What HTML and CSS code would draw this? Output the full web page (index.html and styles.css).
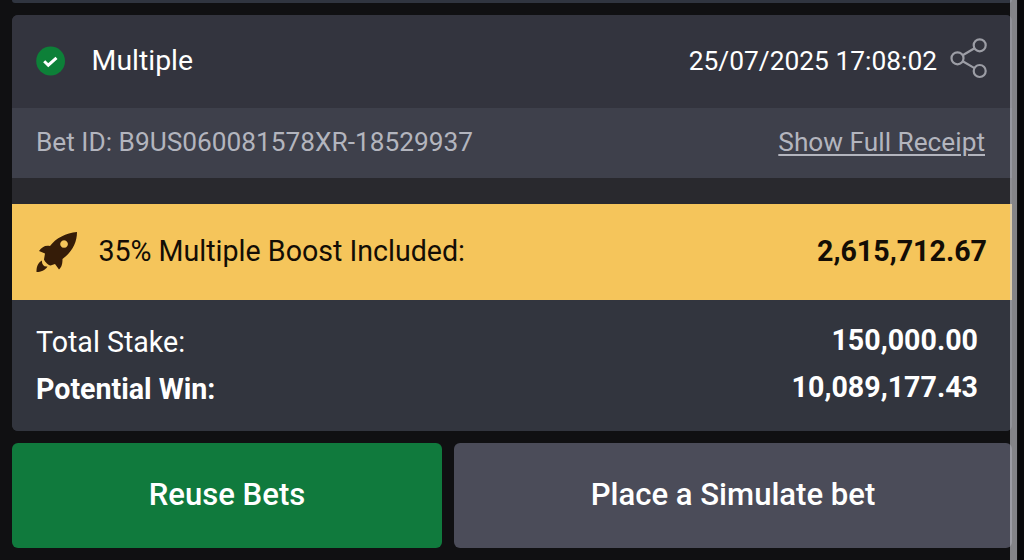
FILE: index.html
```html
<!DOCTYPE html>
<html lang="en">
<head>
	<meta charset="UTF-8">
	<title>Bet Receipt</title>
	<link rel="stylesheet" href="styles.css">
</head>
<body>
	<div class="previous-card"></div>
	<main class="card">
		<header class="card-header">
			<svg class="check" viewBox="0 0 30 30"><circle cx="14.6" cy="15" r="14.4" fill="#0d8038"/><path d="M8.2 15.2l4.1 4 8.2-7.4" fill="none" stroke="#fff" stroke-width="3"/></svg>
			<h1>Multiple</h1>
			<time>25/07/2025 17:08:02</time>
			<svg class="share" viewBox="0 0 38 42"><g fill="none" stroke="#9c9da5" stroke-width="2.2"><circle cx="7.5" cy="21.3" r="6"/><circle cx="29.7" cy="8.3" r="6"/><circle cx="29.7" cy="34" r="6"/><path d="M12.7 18.3l11.8-7M12.7 24.3l11.8 6.8"/></g></svg>
		</header>
		<section class="bet-id">
			<span class="bet-number">Bet ID: B9US060081578XR-18529937</span>
			<a class="receipt-link">Show Full Receipt</a>
		</section>
		<section class="boost">
			<svg class="rocket" viewBox="0 0 42 42"><path fill="#351c08" fill-rule="evenodd" d="M41 1C30 2 20 7 14 15C9 14 6 16 3 20L9 22.5L8 28.5C9 31 12 34 14.5 34.5L19 33L23 38.5C26 36 26.5 32 26.5 28C36 21 41 12 41 1ZM28 9.2a3.8 3.8 0 1 0 .1 0Z"/><path fill="#351c08" d="M5.8 29.5C2 32 .5 35 .5 41C5 41 9 39.5 11.5 35.5C8 36 6 34 5.8 29.5Z"/></svg>
			<span class="boost-label">35% Multiple Boost Included:</span>
			<strong class="boost-value">2,615,712.67</strong>
		</section>
		<section class="totals">
			<div class="row stake"><span>Total Stake:</span><strong>150,000.00</strong></div>
			<div class="row win"><span>Potential Win:</span><strong>10,089,177.43</strong></div>
		</section>
	</main>
	<nav class="actions">
		<button class="reuse">Reuse Bets</button>
		<button class="simulate">Place a Simulate bet</button>
	</nav>
	<div class="scrollbar"></div>
</body>
</html>
```

FILE: styles.css
```css
* {margin:0;padding:0;box-sizing:border-box;}
body {width:1024px;height:560px;padding:0 12px;background-color:#101012;color:#fff;font-family:Roboto,sans-serif;overflow:hidden;position:relative;}
svg {display:block;flex:none;}
span, strong, time, a, h1 {white-space:nowrap;}

.previous-card {width:1000px;height:3px;background-color:#303540;border-radius:0 0 6px 6px;}
.card {width:1000px;height:415.5px;margin-top:12px;background-color:#32343e;border-radius:6px;overflow:hidden;}
.card-header {height:93px;padding:0 24px 2px;display:flex;align-items:center;background-color:#33343e;}
.check {width:30px;height:30px;}
h1 {margin-left:25.6px;font-size:28.4px;font-weight:400;}
time {margin-left:auto;font-size:26.35px;}
.share {width:38px;height:42px;margin-left:13px;position:relative;top:-3px;}

.bet-id {height:70px;padding:0 27px 3px 24px;display:flex;align-items:center;justify-content:space-between;background-color:#3e404b;color:#b3b5be;font-size:26.25px;}
.receipt-link {text-decoration:underline;text-decoration-thickness:2px;text-underline-offset:3px;}

.boost {height:121.5px;border-top:26px solid #29292e;padding:0 25px 0 24px;display:flex;align-items:center;background-color:#f5c55b;color:#130d05;font-size:28.6px;}
.rocket {width:42px;height:42px;}
.boost-label {margin-left:20.4px;padding-bottom:1px;}
.boost-value {margin-left:auto;padding-bottom:1px;}

.totals {height:131px;padding:19px 34px 0 24px;background-color:#32353e;font-size:28.6px;}
.row {height:47px;display:flex;align-items:center;justify-content:space-between;}
.row strong {padding-bottom:5px;font-weight:700;}
.win span {font-weight:700;}

.actions {width:1000px;margin-top:12px;display:flex;gap:12px;}
button {height:105px;padding-bottom:2px;border:none;border-radius:6px;color:#fff;font-family:inherit;font-size:31.1px;font-weight:500;}
.reuse {width:430px;background-color:#107a3d;}
.simulate {width:558px;background-color:#4b4c59;}

/* translucent scrollbar over the right edge of the page */
.scrollbar {position:absolute;top:0;left:1009.5px;width:7.5px;height:560px;background-color:rgba(210,210,215,.6);box-shadow:9px 0 0 1px #08080a;}
```
